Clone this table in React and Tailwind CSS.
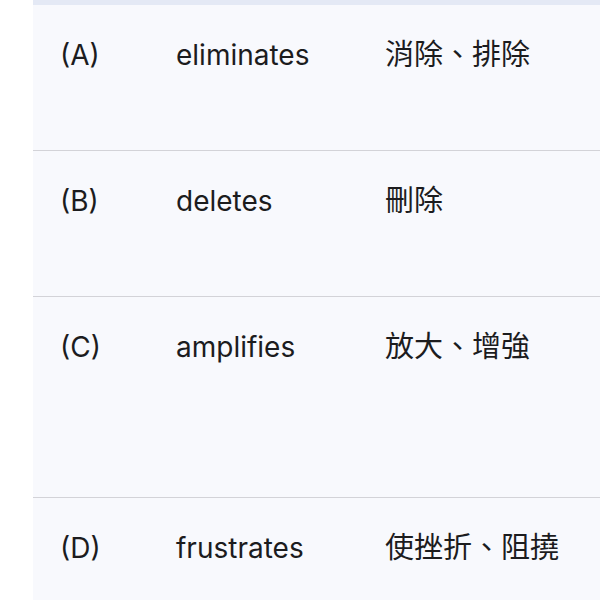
const rows = [
  { label: "(A)", word: "eliminates", meaning: "消除、排除", h: "h-[145px]" },
  { label: "(B)", word: "deletes", meaning: "刪除", h: "h-[146px]" },
  { label: "(C)", word: "amplifies", meaning: "放大、增強", h: "h-[201px]" },
  { label: "(D)", word: "frustrates", meaning: "使挫折、阻撓", h: "h-[140px]" },
];

export default function App() {
  return (
    <div className="w-[600px] h-[600px] overflow-hidden bg-white flex">
      <div className="w-[33px] shrink-0 bg-white" />
      <div className="flex-1 flex flex-col bg-[#f8f9fd]">
        <div className="h-[5px] shrink-0 bg-[#e4e9f5]" />
        {rows.map((row, i) => (
          <div
            key={row.label}
            className={`${row.h} shrink-0 flex items-start pt-[35px] text-[#1c1c1e] text-[28px] leading-[30px] ${
              i > 0 ? "border-t border-[#d3d3d8]" : ""
            }`}
            style={{ fontFamily: '"Inter", "Noto Sans CJK TC", sans-serif' }}
          >
            <div className="w-[143px] pl-[27px]">{row.label}</div>
            <div className="w-[209px]">{row.word}</div>
            <div className="text-[29px]">{row.meaning}</div>
          </div>
        ))}
      </div>
    </div>
  );
}
